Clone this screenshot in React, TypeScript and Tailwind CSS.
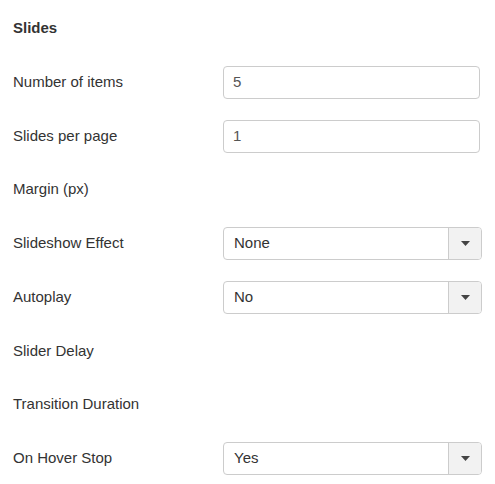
import React from 'react';

type Row = {
  label: string;
  kind: 'input' | 'select' | 'none';
  value?: string;
  gap: string;
};

const rows: Row[] = [
  { label: 'Number of items', kind: 'input', value: '5', gap: 'mb-5' },
  { label: 'Slides per page', kind: 'input', value: '1', gap: 'mb-[19px]' },
  { label: 'Margin (px)', kind: 'none', gap: 'mb-5' },
  { label: 'Slideshow Effect', kind: 'select', value: 'None', gap: 'mb-5' },
  { label: 'Autoplay', kind: 'select', value: 'No', gap: 'mb-5' },
  { label: 'Slider Delay', kind: 'none', gap: 'mb-[19px]' },
  { label: 'Transition Duration', kind: 'none', gap: 'mb-5' },
  { label: 'On Hover Stop', kind: 'select', value: 'Yes', gap: 'mb-0' },
];

function TextInput({ value }: { value?: string }) {
  return (
    <div className="w-[257px] h-[33px] border border-[#ccc] rounded-[4px] bg-white flex items-center px-[9px] text-[15px] text-[#555]">
      {value}
    </div>
  );
}

function SelectBox({ value }: { value?: string }) {
  return (
    <div className="w-[259px] h-[33px] border border-[#ccc] rounded-[4px] bg-white flex text-[15px] text-[#333] overflow-hidden">
      <div className="flex-1 flex items-center px-[10px]">{value}</div>
      <div className="w-[33px] border-l border-[#ccc] bg-[#f2f2f2] flex items-center justify-center">
        <svg width="9" height="5" viewBox="0 0 9 5">
          <path d="M0 0 L9 0 L4.5 5 Z" fill="#444" />
        </svg>
      </div>
    </div>
  );
}

export default function App() {
  return (
    <div
      className="w-[495px] h-[484px] bg-white pl-[13px] pt-[18px] text-[#333]"
      style={{ fontFamily: '"Liberation Sans", Arial, sans-serif' }}
    >
      <h3 className="text-[15px] font-bold leading-[20px] mb-[27px]">Slides</h3>

      <div className="flex flex-col">
        {rows.map((row) => (
          <div key={row.label} className={`flex items-center h-[34px] ${row.gap}`}>
            <div className="w-[210px] text-[15px]">{row.label}</div>
            {row.kind === 'input' && <TextInput value={row.value} />}
            {row.kind === 'select' && <SelectBox value={row.value} />}
          </div>
        ))}
      </div>
    </div>
  );
}
